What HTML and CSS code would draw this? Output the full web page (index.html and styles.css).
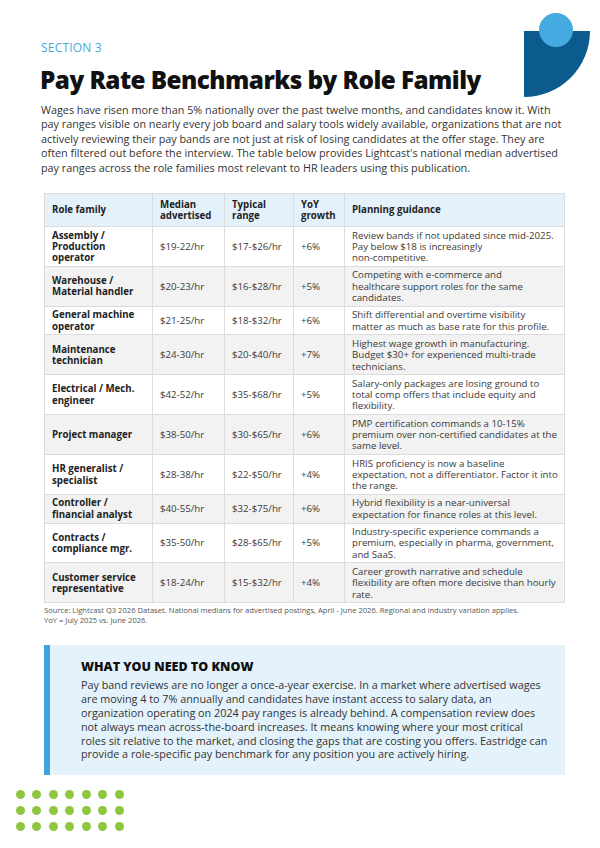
FILE: index.html
```html
<!DOCTYPE html>
<html lang="en">
<head>
<meta charset="utf-8">
<title>Pay Rate Benchmarks by Role Family</title>
<link rel="stylesheet" href="styles.css">
</head>
<body>
<div class="page">
  <header class="top">
    <div class="heading">
      <div class="eyebrow">SECTION 3</div>
      <h1 class="title">Pay Rate Benchmarks by Role Family</h1>
    </div>
    <svg class="logo" width="66" height="86" viewBox="0 0 66 86" aria-hidden="true">
      <path d="M0 18 H66 A66 66 0 0 1 0 84 Z" fill="#0b5b8f"/>
      <circle cx="32" cy="17" r="17" fill="#45aadf"/>
    </svg>
  </header>

  <p class="intro">Wages have risen more than 5% nationally over the past twelve months, and candidates know it. With pay ranges visible on nearly every job board and salary tools widely available, organizations that are not actively reviewing their pay bands are not just at risk of losing candidates at the offer stage. They are often filtered out before the interview. The table below provides Lightcast's national median advertised pay ranges across the role families most relevant to HR leaders using this publication.</p>

  <table class="bench">
    <colgroup>
      <col class="c-role"><col class="c-med"><col class="c-range"><col class="c-yoy"><col class="c-guide">
    </colgroup>
    <thead>
      <tr><th>Role family</th><th>Median advertised</th><th>Typical range</th><th>YoY growth</th><th>Planning guidance</th></tr>
    </thead>
    <tbody>
      <tr><td class="role">Assembly / Production operator</td><td>$19-22/hr</td><td>$17-$26/hr</td><td>+6%</td><td class="guide">Review bands if not updated since mid-2025. Pay below $18 is increasingly non-&#8288;competitive.</td></tr>
      <tr><td class="role">Warehouse / Material handler</td><td>$20-23/hr</td><td>$16-$28/hr</td><td>+5%</td><td class="guide lines">Competing with e-commerce and
healthcare support roles for the same candidates.</td></tr>
      <tr><td class="role">General machine operator</td><td>$21-25/hr</td><td>$18-$32/hr</td><td>+6%</td><td class="guide">Shift differential and overtime visibility matter as much as base rate for this profile.</td></tr>
      <tr><td class="role">Maintenance technician</td><td>$24-30/hr</td><td>$20-$40/hr</td><td>+7%</td><td class="guide">Highest wage growth in manufacturing. Budget $30+ for experienced multi-trade technicians.</td></tr>
      <tr><td class="role">Electrical / Mech. engineer</td><td>$42-52/hr</td><td>$35-$68/hr</td><td>+5%</td><td class="guide">Salary-only packages are losing ground to total comp offers that include equity and flexibility.</td></tr>
      <tr><td class="role">Project manager</td><td>$38-50/hr</td><td>$30-$65/hr</td><td>+6%</td><td class="guide">PMP certification commands a 10-15% premium over non-certified candidates at the same level.</td></tr>
      <tr><td class="role">HR generalist / specialist</td><td>$28-38/hr</td><td>$22-$50/hr</td><td>+4%</td><td class="guide">HRIS proficiency is now a baseline expectation, not a differentiator. Factor it into the range.</td></tr>
      <tr><td class="role">Controller / financial analyst</td><td>$40-55/hr</td><td>$32-$75/hr</td><td>+6%</td><td class="guide">Hybrid flexibility is a near-universal expectation for finance roles at this level.</td></tr>
      <tr><td class="role">Contracts / compliance mgr.</td><td>$35-50/hr</td><td>$28-$65/hr</td><td>+5%</td><td class="guide">Industry-specific experience commands a premium, especially in pharma, government, and SaaS.</td></tr>
      <tr><td class="role">Customer service representative</td><td>$18-24/hr</td><td>$15-$32/hr</td><td>+4%</td><td class="guide">Career growth narrative and schedule flexibility are often more decisive than hourly rate.</td></tr>
    </tbody>
  </table>

  <p class="source">Source: Lightcast Q3 2026 Dataset. National medians for advertised postings, April - June 2026. Regional and industry variation applies.<br>YoY = July 2025 vs. June 2026.</p>

  <aside class="callout">
    <h2 class="callout-title">WHAT YOU NEED TO KNOW</h2>
    <p class="callout-text">Pay band reviews are no longer a once-a-year exercise. In a market where advertised wages are moving 4 to 7% annually and candidates have instant access to salary data, an organization operating on 2024 pay ranges is already behind. A compensation review does not always mean across-the-board increases. It means knowing where your most critical roles sit relative to the market, and closing the gaps that are costing you offers. Eastridge can provide a role-specific pay benchmark for any position you are actively hiring.</p>
  </aside>
</div>
<div class="dots" aria-hidden="true">
  <span></span><span></span><span></span><span></span><span></span><span></span><span></span>
  <span></span><span></span><span></span><span></span><span></span><span></span><span></span>
  <span></span><span></span><span></span><span></span><span></span><span></span><span></span>
</div>
</body>
</html>
```

FILE: styles.css
```css
* { box-sizing: border-box; }

html, body {
  margin: 0;
  padding: 0;
  background: #ffffff;
}

body {
  width: 600px;
  height: 848px;
  overflow: hidden;
  font-family: "Open Sans", "DejaVu Sans", sans-serif;
  color: #333333;
}

.page {
  padding: 13px 10px 0 40px;
}

.top {
  display: flex;
  justify-content: space-between;
  align-items: flex-start;
}

.heading {
  padding-top: 28px;
}

.eyebrow {
  font-size: 12px;
  line-height: 14px;
  color: #4aa8d8;
  letter-spacing: 0.2px;
  padding-left: 1px;
}

.title {
  margin: 10px 0 0;
  font-size: 24.3px;
  line-height: 30px;
  font-weight: 800;
  color: #111111;
  letter-spacing: -0.55px;
}

.logo {
  display: block;
}

.intro {
  margin: 4px 0 0;
  width: 526px;
  padding-left: 1px;
  font-size: 10.8px;
  line-height: 14.4px;
  color: #333333;
}

.bench {
  margin: 18px 0 0 4px;
  width: 520px;
  border-collapse: collapse;
  table-layout: fixed;
  font-size: 9.7px;
  line-height: 11.3px;
  color: #3a3a3a;
}

.c-role { width: 108px; }
.c-med { width: 72px; }
.c-range { width: 69px; }
.c-yoy { width: 51px; }
.c-guide { width: 220px; }

.bench th,
.bench td {
  border: 1px solid #dcdcdc;
  padding: 2.5px 7px;
  text-align: left;
  vertical-align: middle;
}

.bench td.guide {
  padding-right: 6px;
}

.bench td.lines {
  white-space: pre-line;
}

.bench th {
  background: #e4f1fa;
  font-weight: 700;
  color: #222222;
  height: 33px;
}

.bench tbody tr:nth-child(even) td {
  background: #f2f2f2;
}

.bench td.role {
  font-weight: 700;
  color: #222222;
}

.source {
  margin: 3px 0 0 4px;
  font-size: 7.6px;
  line-height: 9.5px;
  color: #555555;
}

.callout {
  margin: 20px 0 0 4px;
  width: 521px;
  background: #e3f2fb;
  border-left: 6px solid #3ea4dc;
  padding: 14px 17px 14px 31px;
}

.callout-title {
  margin: 0;
  font-size: 12.5px;
  line-height: 16px;
  font-weight: 800;
  color: #111111;
}

.callout-text {
  margin: 3px 0 0;
  font-size: 10.8px;
  line-height: 13.8px;
  color: #333333;
}

.dots {
  display: grid;
  grid-template-columns: repeat(7, 9px);
  gap: 7px 7.5px;
  padding: 15px 0 0 15.5px;
}

.dots span {
  width: 9px;
  height: 9px;
  border-radius: 50%;
  background: #8dc641;
}
```
